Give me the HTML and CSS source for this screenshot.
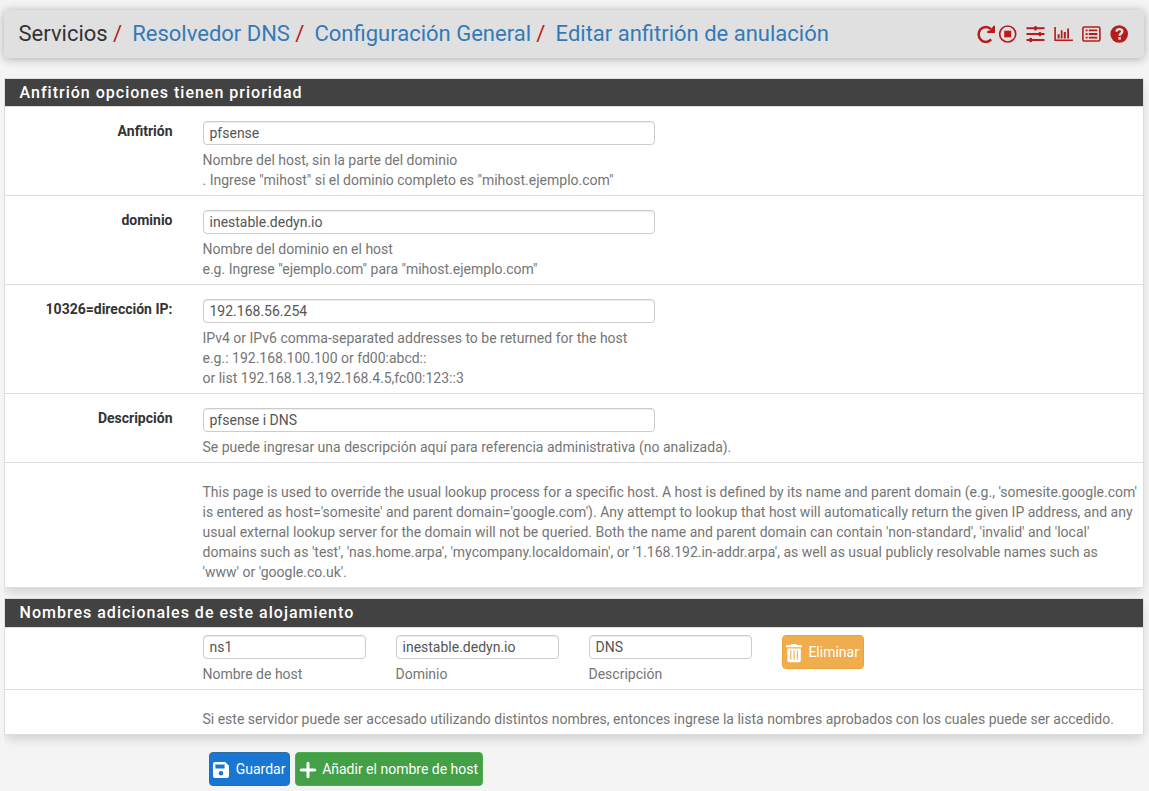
FILE: index.html
```html
<!DOCTYPE html>
<html lang="es">
<head>
<meta charset="utf-8">
<title>Editar anfitrión de anulación</title>
<link rel="stylesheet" href="styles.css">
</head>
<body>
<header class="header">
  <nav class="crumbs"><span>Servicios</span><i>/</i><a>Resolvedor DNS</a><i>/</i><a>Configuración General</a><i>/</i><a>Editar anfitrión de anulación</a></nav>
  <div class="tools">
    <svg class="ic-reload" width="18" height="18" viewBox="0 0 18 18"><path d="M14.2 14.4A7.2 7.5 0 1 1 14 4.2" fill="none" stroke="currentColor" stroke-width="2.5"/><path d="M18 .4v7.6h-7.8V6l2.8-.4 3.4-4.6z" fill="currentColor"/></svg>
    <svg class="ic-stop" width="18" height="18" viewBox="0 0 18 18"><circle cx="8.7" cy="9" r="8" fill="none" stroke="currentColor" stroke-width="1.6"/><path d="M5.2 5.7h7v6.6h-7z" fill="currentColor"/></svg>
    <svg class="ic-wide" width="19" height="18" viewBox="0 0 19 18" fill="currentColor"><path d="M.5 2.2h18v2H.5zM.5 8.1h18v2H.5zM.5 14h18v2H.5z"/><rect x="8.2" y="1" width="2.6" height="4.4" rx="1"/><rect x="12.6" y="6.9" width="2.6" height="4.4" rx="1"/><rect x="3.4" y="12.8" width="2.6" height="4.4" rx="1"/></svg>
    <svg class="ic-wide" width="19" height="18" viewBox="0 0 19 18" fill="currentColor"><path d="M.3 2h1.6v12.5h17V16H.3zM3.6 9.3h2v4.2h-2zM6.8 5.3h1.7v8.2H6.8zM9.8 7h2v6.5h-2zM13.2 3.6h1.8v9.9h-1.8z"/></svg>
    <svg class="ic-wide" width="19" height="18" viewBox="0 0 19 18"><rect x=".9" y="2" width="17" height="14" rx="1.4" fill="none" stroke="currentColor" stroke-width="1.6"/><path d="M3.6 4.5h2v1.8h-2zM6.8 4.5h8.5v1.8H6.8zM3.6 8.1h2v1.8h-2zM6.8 8.1h8.5v1.8H6.8zM3.6 11.7h2v1.8h-2zM6.8 11.7h8.5v1.8H6.8z" fill="currentColor"/></svg>
    <svg class="ic-help" width="18" height="18" viewBox="0 0 18 18"><circle cx="9.2" cy="9" r="8.8" fill="currentColor"/><path d="M6.2 6.6C6.7 4.7 7.9 4.1 9.3 4.1c1.8 0 3 1 3 2.4 0 2.1-2.7 2-2.7 4.2" fill="none" stroke="#e0e0e0" stroke-width="2.4"/><path d="M8.3 12h2.6v2.6H8.3z" fill="#e0e0e0"/></svg>
  </div>
</header>

<section class="panel">
  <h2>Anfitrión opciones tienen prioridad</h2>
  <div class="row"><label>Anfitrión</label><div class="field"><input class="main-input" value="pfsense"><p>Nombre del host, sin la parte del dominio<br>. Ingrese "mihost" si el dominio completo es "mihost.ejemplo.com"</p></div></div>
  <div class="row"><label>dominio</label><div class="field"><input class="main-input" value="inestable.dedyn.io"><p>Nombre del dominio en el host<br>e.g. Ingrese "ejemplo.com" para "mihost.ejemplo.com"</p></div></div>
  <div class="row"><label>10326=dirección IP:</label><div class="field"><input class="main-input" value="192.168.56.254"><p>IPv4 or IPv6 comma-separated addresses to be returned for the host<br>e.g.: 192.168.100.100 or fd00:abcd::<br>or list 192.168.1.3,192.168.4.5,fc00:123::3</p></div></div>
  <div class="row"><label>Descripción</label><div class="field"><input class="main-input" value="pfsense i DNS"><p>Se puede ingresar una descripción aquí para referencia administrativa (no analizada).</p></div></div>
  <div class="row note"><label></label><div class="field"><p>This page is used to override the usual lookup process for a specific host. A host is defined by its name and parent domain (e.g., 'somesite.google.com'<br>is entered as host='somesite' and parent domain='google.com'). Any attempt to lookup that host will automatically return the given IP address, and any<br>usual external lookup server for the domain will not be queried. Both the name and parent domain can contain 'non-standard', 'invalid' and 'local'<br>domains such as 'test', 'nas.home.arpa', 'mycompany.localdomain', or '1.168.192.in-addr.arpa', as well as usual publicly resolvable names such as<br>'www' or 'google.co.uk'.</p></div></div>
</section>

<section class="panel aliases">
  <h2>Nombres adicionales de este alojamiento</h2>
  <div class="row alias"><label></label>
    <div class="cell"><input value="ns1"><p>Nombre de host</p></div>
    <div class="cell"><input value="inestable.dedyn.io"><p>Dominio</p></div>
    <div class="cell"><input value="DNS"><p>Descripción</p></div>
    <button class="btn warning"><svg width="18" height="20" viewBox="0 0 18 20"><path d="M1 2.2h4.5L6.4 1h5l.9 1.2H17v2H1z" fill="#fff"/><path d="M2.4 5.4h13.4v12.1q0 1.7-1.7 1.7h-10q-1.7 0-1.7-1.7z" fill="#fff"/><path d="M5.8 7.6v9M9.1 7.6v9M12.4 7.6v9" stroke="#f0ad4e" stroke-width="1.1"/></svg>Eliminar</button>
  </div>
  <div class="row note"><label></label><div class="field"><p>Si este servidor puede ser accesado utilizando distintos nombres, entonces ingrese la lista nombres aprobados con los cuales puede ser accedido.</p></div></div>
</section>

<div class="actions">
  <button class="btn primary"><svg width="18" height="20" viewBox="0 0 18 20"><path fill-rule="evenodd" d="M3 2h10.3L17 5.7V16q0 2-2 2H3q-2 0-2-2V4q0-2 2-2zm.4 2.6v3.8h9.2V4.6zM9 11a2.3 2.3 0 1 0 0 4.6A2.3 2.3 0 0 0 9 11z" fill="#fff"/></svg>Guardar</button>
  <button class="btn success"><svg width="18" height="20" viewBox="0 0 18 20"><path d="M9 3.2v13.6M2.2 10h13.6" stroke="#fff" stroke-width="3" stroke-linecap="round"/></svg>Añadir el nombre de host</button>
</div>
</body>
</html>
```
FILE: styles.css
```css
* { box-sizing: border-box; }
body {
  margin: 0;
  padding: 10px 5px 0 4px;
  height: 791px;
  overflow: hidden;
  background: #f4f4f4;
  color: #333;
  font: 14px/20px Roboto, sans-serif;
}
p, h2 { margin: 0; }
.header {
  display: flex;
  justify-content: space-between;
  align-items: center;
  height: 48px;
  margin-bottom: 20px;
  padding: 0 16px 0 14.5px;
  border-radius: 4px;
  background: #e0e0e0;
  box-shadow: 0 1px 10px rgba(0, 0, 0, .3);
}
.crumbs { font-size: 22px; line-height: 48px; white-space: nowrap; }
.crumbs a { color: #337ab7; }
.crumbs i { margin: 0 10.2px 0 5.3px; color: #b71c1c; font-style: normal; }
.tools { display: flex; color: #b71c1c; }
.tools svg { display: block; }
.ic-stop { margin-left: 4px; }
.ic-wide { margin-left: 9px; }
.ic-help { margin-left: 9px; }
.panel {
  margin-bottom: 10px;
  border: 1px solid #ddd;
  background: #fff;
  box-shadow: 0 6px 10px -2px rgba(0, 0, 0, .15);
  clip-path: inset(0 -5px -16px 0);
}
.panel h2 {
  height: 28px;
  padding-left: 14.6px;
  border-bottom: 1px solid #ddd;
  background: #424242;
  color: #fff;
  font-size: 16px;
  font-weight: 500;
  line-height: 27px;
  letter-spacing: 1px;
}
.aliases h2 { height: 29px; }
.row { display: flex; padding: 14px 0 5px; border-bottom: 1px solid #ddd; }
.row:last-child { border-bottom: 0; }
.row label {
  flex: none;
  width: 167.5px;
  margin-right: 30px;
  font-weight: 700;
  text-align: right;
}
.row p { margin-top: 5px; color: #757575; white-space: nowrap; }
input {
  display: block;
  width: 100%;
  height: 24px;
  padding: 0 6px;
  border: 1px solid #ccc;
  border-radius: 4px;
  background: #fff;
  color: #555;
  font: 14px/20px Roboto, sans-serif;
  box-shadow: inset 0 1px 1px rgba(0, 0, 0, .075);
}
.field .main-input { width: 452px; }
.alias { padding-top: 7px; }
.cell { width: 163px; margin-right: 30px; }
.btn {
  display: flex;
  align-items: center;
  gap: 5.4px;
  height: 34px;
  padding: 0 3.8px 0 2.5px;
  border: 1px solid;
  border-radius: 4px;
  color: #fff;
  font: 14px/20px Roboto, sans-serif;
  white-space: nowrap;
}
.btn svg { margin-top: 2px; }
.warning { background: #f0ad4e; border-color: #eea236; }
.primary { background: #1976d2; border-color: #2e6da4; }
.success { background: #43a047; border-color: #4cae4c; }
.actions { display: flex; gap: 5px; padding: 7px 0 0 204.8px; }
```
